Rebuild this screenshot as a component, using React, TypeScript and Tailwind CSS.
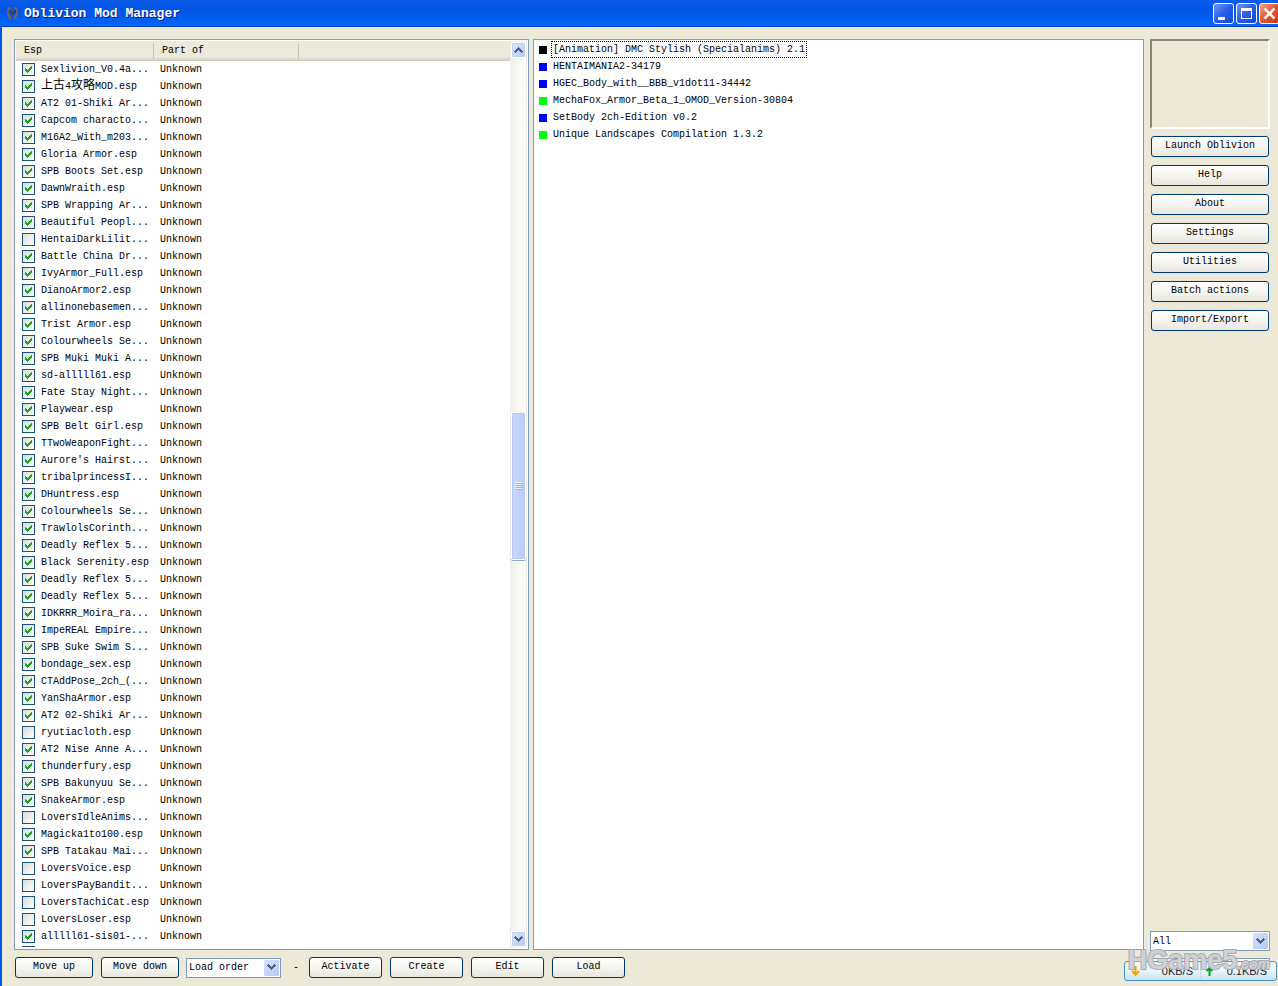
import type { ReactNode } from "react";

const plugins: Array<[string, boolean]> = [
  ["Sexlivion_V0.4a...", true],
  ["上古4攻略MOD.esp", true],
  ["AT2 01-Shiki Ar...", true],
  ["Capcom characto...", true],
  ["M16A2_With_m203...", true],
  ["Gloria Armor.esp", true],
  ["SPB Boots Set.esp", true],
  ["DawnWraith.esp", true],
  ["SPB Wrapping Ar...", true],
  ["Beautiful Peopl...", true],
  ["HentaiDarkLilit...", false],
  ["Battle China Dr...", true],
  ["IvyArmor_Full.esp", true],
  ["DianoArmor2.esp", true],
  ["allinonebasemen...", true],
  ["Trist Armor.esp", true],
  ["Colourwheels Se...", true],
  ["SPB Muki Muki A...", true],
  ["sd-alllll61.esp", true],
  ["Fate Stay Night...", true],
  ["Playwear.esp", true],
  ["SPB Belt Girl.esp", true],
  ["TTwoWeaponFight...", true],
  ["Aurore's Hairst...", true],
  ["tribalprincessI...", true],
  ["DHuntress.esp", true],
  ["Colourwheels Se...", true],
  ["TrawlolsCorinth...", true],
  ["Deadly Reflex 5...", true],
  ["Black Serenity.esp", true],
  ["Deadly Reflex 5...", true],
  ["Deadly Reflex 5...", true],
  ["IDKRRR_Moira_ra...", true],
  ["ImpeREAL Empire...", true],
  ["SPB Suke Swim S...", true],
  ["bondage_sex.esp", true],
  ["CTAddPose_2ch_(...", true],
  ["YanShaArmor.esp", true],
  ["AT2 02-Shiki Ar...", true],
  ["ryutiacloth.esp", false],
  ["AT2 Nise Anne A...", true],
  ["thunderfury.esp", true],
  ["SPB Bakunyuu Se...", true],
  ["SnakeArmor.esp", true],
  ["LoversIdleAnims...", false],
  ["Magicka1to100.esp", true],
  ["SPB Tatakau Mai...", true],
  ["LoversVoice.esp", false],
  ["LoversPayBandit...", false],
  ["LoversTachiCat.esp", false],
  ["LoversLoser.esp", false],
  ["alllll61-sis01-...", true],
];

const mods = [
  { name: "[Animation] DMC Stylish (Specialanims) 2.1", color: "bg-black", focused: true },
  { name: "HENTAIMANIA2-34179", color: "bg-[#0000ff]" },
  { name: "HGEC_Body_with__BBB_v1dot11-34442", color: "bg-[#0000ff]" },
  { name: "MechaFox_Armor_Beta_1_OMOD_Version-30804", color: "bg-[#00ff00]" },
  { name: "SetBody 2ch-Edition v0.2", color: "bg-[#0000ff]" },
  { name: "Unique Landscapes Compilation 1.3.2", color: "bg-[#00ff00]" },
];

const sideActions = [
  "Launch Oblivion",
  "Help",
  "About",
  "Settings",
  "Utilities",
  "Batch actions",
  "Import/Export",
];

function Chevron({ up }: { up?: boolean }) {
  return (
    <svg width="9" height="7" viewBox="0 0 9 7" shapeRendering="crispEdges">
      <path
        d={
          up
            ? "M4 0h1v1h1v1h1v1h1v1h1v1h-1v1h-1v-1h-1v-1h-1v-1h-1v1h-1v1h-1v1h-1v-1h-1v-1h1v-1h1v-1h1v-1h1z"
            : "M1 0h1v1h1v1h1v1h1v-1h1v-1h1v-1h1v1h1v1h-1v1h-1v1h-1v1h-1v1h-1v-1h-1v-1h-1v-1h-1v-1h-1v-1h1z"
        }
        fill="#4d6185"
      />
    </svg>
  );
}

function XpButton({ children, className }: { children: ReactNode; className: string }) {
  return (
    <button
      type="button"
      className={`h-[21px] shrink-0 rounded-[3px] border border-[#003c74] bg-linear-to-b from-white via-[#f6f5f0] to-[#e8e6dd] pb-[2px] leading-4 shadow-[0_0_0_1px_#e6e3d3] ${className}`}
    >
      {children}
    </button>
  );
}

function XpSelect({ label, value, className }: { label: string; value: string; className: string }) {
  return (
    <div className={`relative h-5 shrink-0 border border-[#7f9db9] bg-white ${className}`}>
      <select aria-label={label} className="h-full w-full appearance-none bg-transparent pl-[2px] outline-none">
        <option>{value}</option>
      </select>
      <span className="pointer-events-none absolute inset-y-px right-px flex w-[15px] items-center justify-center rounded-[1px] bg-linear-to-br from-[#d6e2fe] to-[#b4c8f6]">
        <Chevron />
      </span>
    </div>
  );
}

function PluginName({ name }: { name: string }) {
  return (
    <>
      {name.split(/([\u4e00-\u9fff]+)/).map((part, index) =>
        index % 2 === 1 ? (
          <span className="align-middle text-xs leading-none" key={index}>
            {part}
          </span>
        ) : (
          part
        )
      )}
    </>
  );
}

function PluginRow({ name, checked }: { name: string; checked: boolean }) {
  return (
    <tr className="h-[17px]">
      <td className="p-0">
        <label className="flex h-[17px] items-center pl-[6px] leading-4 whitespace-nowrap">
          <span className="relative mr-[6px] size-[13px] shrink-0">
            <input
              type="checkbox"
              defaultChecked={checked}
              className="peer block size-[13px] appearance-none border border-[#1c5180] bg-linear-to-br from-[#dcdcd7] to-white"
            />
            <svg
              className="pointer-events-none absolute inset-0 hidden peer-checked:block"
              width="13"
              height="13"
              viewBox="0 0 13 13"
              shapeRendering="crispEdges"
            >
              <path
                d="M3 5h1v1h1v1h1v-1h1v-1h1v-1h1v-1h1v3h-1v1h-1v1h-1v1h-1v1h-1v-1h-1v-1h-1z"
                fill="#21a121"
              />
            </svg>
          </span>
          <span>
            <PluginName name={name} />
          </span>
        </label>
      </td>
      <td className="p-0 pl-[6px] leading-4">Unknown</td>
      <td className="p-0"></td>
    </tr>
  );
}

function ScrollBar() {
  return (
    <div className="flex w-[17px] shrink-0 flex-col border-x border-[#eeede5] bg-linear-to-r from-[#f3f1ec] to-[#fefefb]">
      <div className="mt-px flex h-4 items-center justify-center rounded-[2px] border border-white bg-linear-to-br from-[#dbe6ff] to-[#b3c8f8] shadow-[inset_0_0_0_1px_#c1d0f5]">
        <Chevron up />
      </div>
      <div className="grow-354"></div>
      <div className="flex h-[148px] flex-col items-center justify-center gap-px rounded-[2px] border border-white bg-linear-to-r from-[#c9d8fc] to-[#b9cdfb] shadow-[inset_0_0_0_1px_#b4c8f6,0_1px_0_#8ba5d6]">
        {[0, 1, 2, 3].map((i) => (
          <div className="h-px w-[7px] bg-[#eef4fe] shadow-[1px_1px_0_#8cb0f8]" key={i}></div>
        ))}
      </div>
      <div className="grow-372"></div>
      <div className="mb-px flex h-4 items-center justify-center rounded-[2px] border border-white bg-linear-to-br from-[#dbe6ff] to-[#b3c8f8] shadow-[inset_0_0_0_1px_#c1d0f5]">
        <Chevron />
      </div>
    </div>
  );
}

function TitleBar() {
  const windowButton =
    "flex size-[21px] items-center justify-center rounded-[3px] border border-white";
  return (
    <header className="flex h-[27px] shrink-0 items-center overflow-hidden bg-linear-to-b from-[#0a5be8] via-[#0055e5] via-40% to-[#0268fe] pl-[7px] shadow-[inset_0_-1px_0_#0040c8]">
      <svg width="11" height="13" viewBox="0 0 11 13" className="mr-[6px]">
        <path
          d="M4 1H2v2H1v5h1v2h1v2h1M7 1h2v2h1v5H9v2H8v2H7"
          fill="none"
          stroke="#8a6248"
          strokeWidth="1.5"
        />
        <path d="M3 3v3M8 3v3M5.5 5v3" stroke="#2d2a3c" strokeWidth="1" />
      </svg>
      <h1 className="flex-1 text-[13px] leading-4 font-bold text-white [text-shadow:1px_1px_0_#0a1883]">
        Oblivion Mod Manager
      </h1>
      <div className="-mr-[2px] flex gap-[2px]">
        <button
          type="button"
          aria-label="Minimize"
          className={`${windowButton} bg-linear-to-br from-[#6e93f5] via-[#2a5de8] to-[#1446d8]`}
        >
          <svg width="13" height="13" viewBox="0 0 13 13">
            <path d="M1 10h7v3h-7z" fill="white" />
          </svg>
        </button>
        <button
          type="button"
          aria-label="Maximize"
          className={`${windowButton} bg-linear-to-br from-[#6e93f5] via-[#2a5de8] to-[#1446d8]`}
        >
          <svg width="13" height="13" viewBox="0 0 13 13">
            <path d="M1 1h11v11H1zM2 4v7h9V4z" fill="white" fillRule="evenodd" />
          </svg>
        </button>
        <button
          type="button"
          aria-label="Close"
          className={`${windowButton} bg-linear-to-br from-[#f0a088] via-[#e3532d] to-[#c93a14]`}
        >
          <svg width="13" height="13" viewBox="0 0 13 13">
            <path d="M1.5 1.5l10 10M11.5 1.5l-10 10" stroke="white" strokeWidth="2.5" />
          </svg>
        </button>
      </div>
    </header>
  );
}

function SpeedMeter() {
  return (
    <div className="absolute right-px bottom-[5px] flex h-5 w-[153px] items-center rounded-[3px] border border-[#4a94c8] bg-linear-to-b from-white/60 via-[#eaf5fb] to-[#c4e2f2] font-['Liberation_Sans',sans-serif] text-[11px] leading-4 text-[#222]">
      <svg width="9" height="10" viewBox="0 0 9 10" className="ml-[6px]">
        <path d="M4.5 0v8M1 5l3.5 3.5L8 5" fill="none" stroke="#f5a00a" strokeWidth="2" />
      </svg>
      <span className="flex-1 pr-[7px] text-right">0KB/S</span>
      <span className="h-full w-px bg-[#c0dbe8]"></span>
      <svg width="9" height="10" viewBox="0 0 9 10" className="ml-1">
        <path d="M4.5 10V2M1.5 5l3-3 3 3" fill="none" stroke="#0a9a1c" strokeWidth="2" />
      </svg>
      <span className="w-[62px] pr-[9px] text-right">0.1KB/S</span>
    </div>
  );
}

function Watermark() {
  return (
    <div className="pointer-events-none absolute right-2 bottom-2 flex items-baseline font-['Liberation_Sans',sans-serif] leading-7 font-bold text-[#cfd1d6] [paint-order:stroke_fill] [-webkit-text-stroke:2px_#a9abb2]">
      <span className="text-[27px]">HGame5</span>
      <span className="text-[14px] italic">.com</span>
    </div>
  );
}

export default function App() {
  return (
    <div className="relative flex h-screen flex-col overflow-hidden bg-[#ece9d8] font-['Liberation_Mono','Noto_Sans_CJK_SC',monospace] text-[10px] text-black">
      <TitleBar />
      <div className="flex min-h-0 flex-1 gap-[6px] border-l-2 border-[#0055e5] pt-3 pr-2 pb-2 pl-3">
        <main className="flex min-w-0 flex-1 flex-col gap-[7px]">
          <div className="grid min-h-0 flex-1 grid-cols-[515fr_611fr] gap-1">
            <section className="flex min-h-0 border border-[#7f9db9] bg-white p-px">
              <div className="min-w-0 flex-1 overflow-hidden">
                <table className="w-full table-fixed border-collapse">
                  <thead>
                    <tr className="h-5 bg-linear-to-b from-[#ebeadb] from-80% to-[#cbc7b8] text-left leading-4">
                      <th className="w-[138px] p-0 font-normal">
                        <div className="my-[2px] border-r border-[#c7c5b2] pl-2">Esp</div>
                      </th>
                      <th className="w-[145px] p-0 font-normal">
                        <div className="my-[2px] border-r border-[#c7c5b2] pl-2">Part of</div>
                      </th>
                      <th className="p-0"></th>
                    </tr>
                  </thead>
                  <tbody>
                    {plugins.map(([name, checked], index) => (
                      <PluginRow name={name} checked={checked} key={`${name}_${index}`} />
                    ))}
                  </tbody>
                </table>
                {/* edge of the next row */}
                <div className="mt-px ml-[6px] h-px w-[13px] bg-[#1c5180]"></div>
              </div>
              <ScrollBar />
            </section>

            <section className="min-h-0 overflow-hidden border border-[#7f9db9] bg-white pt-px pl-[5px]">
              <ul>
                {mods.map((m) => (
                  <li className="flex h-[17px] items-center gap-1 leading-[15px]" key={m.name}>
                    <span className={`size-2 shrink-0 ${m.color}`}></span>
                    <span
                      className={`border px-px ${m.focused ? "border-dotted border-black" : "border-transparent"}`}
                    >
                      {m.name}
                    </span>
                  </li>
                ))}
              </ul>
            </section>
          </div>

          <div className="flex items-center pl-px">
            <XpButton className="mr-2 w-[78px]">Move up</XpButton>
            <XpButton className="mr-[7px] w-[78px]">Move down</XpButton>
            <XpSelect label="Sort order" value="Load order" className="w-[95px]" />
            <span className="w-7 pl-3">-</span>
            <div className="flex gap-2">
              <XpButton className="w-[73px]">Activate</XpButton>
              <XpButton className="w-[73px]">Create</XpButton>
              <XpButton className="w-[73px]">Edit</XpButton>
              <XpButton className="w-[73px]">Load</XpButton>
            </div>
          </div>
        </main>

        <aside className="flex w-[120px] shrink-0 flex-col">
          <div className="h-[90px] shrink-0 border-2 border-t-[#8a877a] border-r-white border-b-white border-l-[#8a877a]"></div>
          <div className="mt-[7px] flex flex-col gap-2 px-px">
            {sideActions.map((a) => (
              <XpButton className="w-full" key={a}>
                {a}
              </XpButton>
            ))}
          </div>
          <div className="flex-1"></div>
          <XpSelect label="Filter" value="All" className="mb-[7px] w-full" />
          <XpSelect label="Group" value="" className="w-full" />
        </aside>
      </div>
      <SpeedMeter />
      <Watermark />
    </div>
  );
}
